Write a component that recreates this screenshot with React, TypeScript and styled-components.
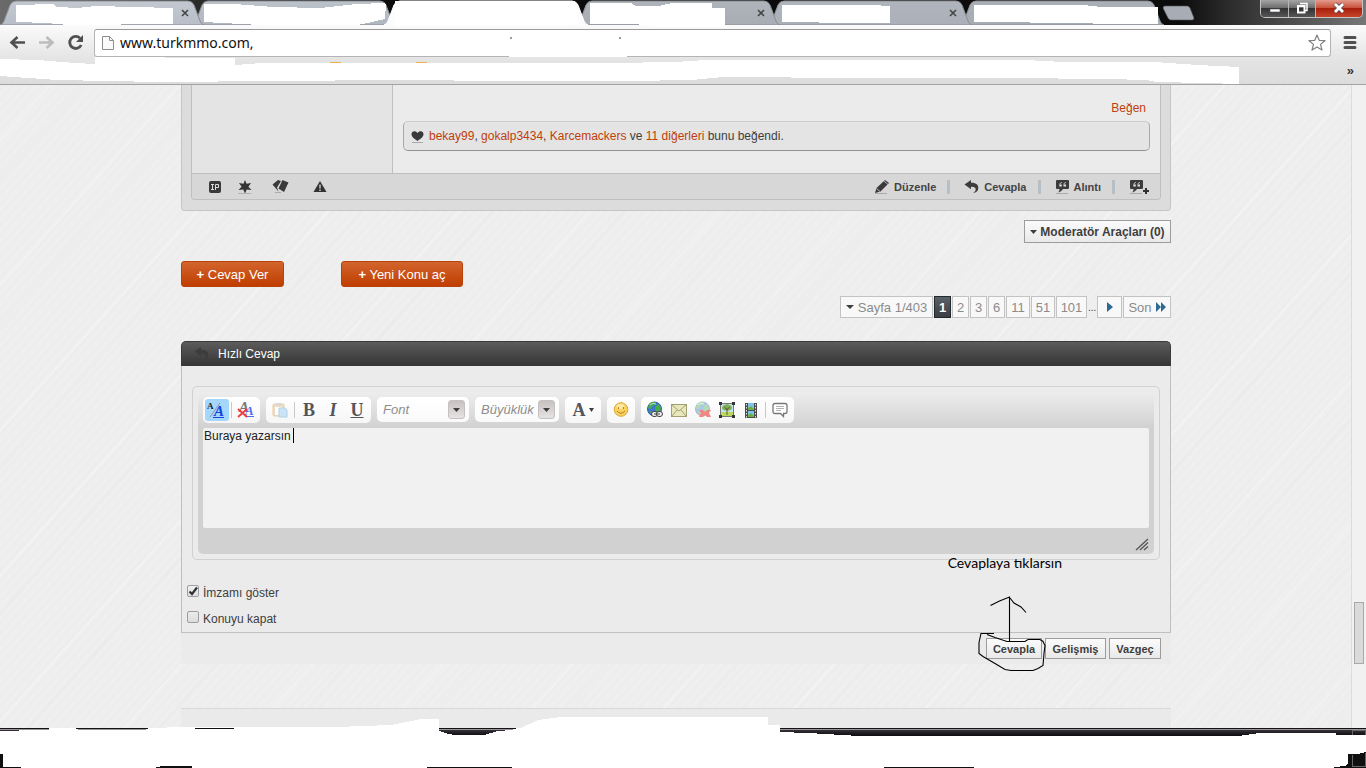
import React from "react";
import styled, { createGlobalStyle, css } from "styled-components";

const Global = createGlobalStyle`
  *, *::before, *::after { box-sizing: border-box; }
  body { margin: 0; background: #fff; font-family: "Liberation Sans", Arial, sans-serif; font-size: 12px; color: #3e3e3e; }
  button, input, select, textarea { font-family: inherit; margin: 0; }
`;

/* ---------- browser window ---------- */

const Screen = styled.div`
  position: relative;
  display: flex;
  flex-direction: column;
  min-height: 100vh;
  overflow: hidden;
`;

const Chrome = styled.header`
  position: relative;
  border-bottom: 1px solid #a3a3a3;
`;

const TabStrip = styled.nav`
  display: flex;
  height: 25px;
  background: linear-gradient(90deg, #6b6b6b 0, #2c2c2c 190px, #0c0c0c 400px, #0c0c0c 1180px, #2c2c2c 1230px, #777 100%);
`;

const TabBox = styled.button<{ $z: number }>`
  position: relative;
  z-index: ${(p) => p.$z};
  flex: 0 0 204px;
  height: 25px;
  margin-right: -12px;
  padding: 0;
  border: 0;
  background: none;
  svg { display: block; }
`;

const NewTab = styled.button`
  width: 32px;
  height: 25px;
  margin-left: 11px;
  padding: 0;
  border: 0;
  background: none;
  svg { display: block; }
`;

const WindowControls = styled.div`
  display: flex;
  height: 18px;
  margin-left: auto;
  margin-right: 3px;
  border: 1px solid #c4c4c4;
  border-top: 0;
  border-radius: 0 0 5px 5px;
  overflow: hidden;
`;

const WindowButton = styled.button<{ $close?: boolean }>`
  width: ${(p) => (p.$close ? 47 : 27)}px;
  padding: 0;
  border: 0;
  border-left: 1px solid #b5b5b5;
  background: ${(p) =>
    p.$close
      ? "linear-gradient(#e39a8c, #c9533c 45%, #a8200c 50%, #c6442a)"
      : "linear-gradient(#a5a5a5, #6e6e6e 45%, #333 50%, #565656)"};
  &:first-child { border-left: 0; }
  svg { display: block; margin: 0 auto; }
`;

const ToolbarArea = styled.div`
  background: linear-gradient(#fbfbfb, #e4e4e4 34px, #dcdcdc);
`;

const Toolbar = styled.div`
  display: flex;
  align-items: center;
  height: 32px;
  padding: 4px 8px 0;
`;

const NavButton = styled.button`
  width: 20px;
  height: 20px;
  margin-right: 9px;
  padding: 0;
  border: 0;
  background: none;
  svg { display: block; }
`;

const AddressBox = styled.label`
  display: flex;
  align-items: center;
  flex: 1;
  height: 28px;
  margin-right: 11px;
  margin-left: -1px;
  padding: 0 4px 0 6px;
  background: #fff;
  border: 1px solid #b4b4b4;
  border-top-color: #999;
  border-radius: 3px;
`;

const AddressInput = styled.input`
  flex: 1;
  height: 24px;
  padding: 0 0 2px 5px;
  border: 0;
  outline: 0;
  background: none;
  color: #111;
  font-family: "Noto Sans", "Open Sans", sans-serif;
  font-size: 14px;
`;

const MenuButton = styled(NavButton)`
  width: 16px;
  margin-right: 0;
`;

const BookmarkBar = styled.div`
  display: flex;
  justify-content: flex-end;
  align-items: center;
  height: 27px;
  padding-right: 12px;
`;

const MoreButton = styled.button`
  padding: 0;
  border: 0;
  background: none;
  font-size: 13px;
  font-weight: bold;
  line-height: 20px;
  color: #333;
`;

const Overlay = styled.svg<{ $bottom?: boolean; $z?: number }>`
  position: absolute;
  left: 0;
  ${(p) => (p.$bottom ? "bottom: 0;" : "top: 0;")}
  z-index: ${(p) => p.$z ?? 10};
  pointer-events: none;
`;

/* ---------- page ---------- */

const Viewport = styled.div`
  display: flex;
  flex: 1;
`;

const Page = styled.main`
  flex: 1;
  display: flex;
  justify-content: center;
  padding-left: 1px;
  background:
    repeating-linear-gradient(132deg, transparent 0 36px, rgba(255,255,255,.25) 37px 38px, transparent 39px 61px, rgba(0,0,0,.006) 62px 64px, transparent 65px 97px),
    repeating-linear-gradient(132deg, rgba(255,255,255,.08) 0 1px, rgba(0,0,0,.004) 2px 4px, rgba(255,255,255,.06) 5px 7px),
    #eeeeee;
`;

const ScrollTrack = styled.div`
  display: flex;
  flex-direction: column;
  justify-content: flex-end;
  width: 15px;
  padding: 0 1px 64px 2px;
  background: #f1f1f1;
  border-left: 1px solid #dcdcdc;
`;

const ScrollThumb = styled.div`
  width: 10px;
  height: 62px;
  border: 1px solid #a9a9a9;
  background: #dadada;
`;

const Column = styled.div`
  position: relative;
  display: flex;
  flex-direction: column;
  flex: 0 1 990px;
  min-width: 0;
`;

const Post = styled.article`
  padding: 0 10px 10px;
  background: #dcdcdc;
  border: 1px solid #c6c6c6;
  border-top: 0;
  border-radius: 0 0 4px 4px;
`;

const PostInner = styled.div`
  border: 1px solid #bfbfbf;
  border-top: 0;
  border-radius: 0 0 4px 4px;
  margin: 0 -1px;
`;

const PostContent = styled.div`
  display: flex;
  height: 88px;
`;

const UserColumn = styled.div`
  width: 201px;
  background: #e4e4e4;
  border-right: 1px solid #bfbfbf;
`;

const PostBody = styled.div`
  flex: 1;
  display: flex;
  flex-direction: column;
  padding: 15px 10px 0;
  background: #ebebeb;
`;

const TextLink = styled.a<{ $end?: boolean }>`
  color: #be3e0c;
  text-decoration: none;
  ${(p) => p.$end && css`
    align-self: flex-end;
    padding-right: 4px;
    line-height: 16px;
  `}
`;

const LikeBox = styled.div`
  display: flex;
  align-items: center;
  gap: 5px;
  height: 30px;
  margin-top: 5px;
  padding: 0 7px;
  background: #e4e4e4;
  border: 1px solid #a9a9a9;
  border-top-color: #cdcdcd;
  border-bottom-color: #919191;
  border-radius: 5px;
`;

const PostFooter = styled.div`
  display: flex;
  align-items: center;
  height: 26px;
  padding: 0 11px 0 15px;
  background: #d7d7d7;
  border-top: 1px solid #bfbfbf;
  border-radius: 0 0 4px 4px;
`;

const IconLink = styled.a<{ $w: number }>`
  display: flex;
  justify-content: center;
  width: ${(p) => p.$w}px;
`;

const PostActions = styled.div`
  display: flex;
  align-items: center;
  margin-left: auto;
`;

const PostAction = styled.a`
  display: flex;
  align-items: center;
  gap: 4px;
  color: #444;
  font-size: 11px;
  font-weight: bold;
  text-decoration: none;
`;

const Divider = styled.span`
  width: 3px;
  height: 14px;
  margin: 0 14px 0 11px;
  background: #b6bfc5;
`;

const Row = styled.div<{ $top: number; $end?: boolean; $gap?: number }>`
  display: flex;
  align-items: center;
  justify-content: ${(p) => (p.$end ? "flex-end" : "flex-start")};
  gap: ${(p) => p.$gap ?? 0}px;
  margin-top: ${(p) => p.$top}px;
`;

const GreyButton = styled.button<{ $large?: boolean; $w: number }>`
  display: flex;
  align-items: center;
  justify-content: center;
  gap: 3px;
  width: ${(p) => p.$w}px;
  height: ${(p) => (p.$large ? 23 : 21)}px;
  padding: 0;
  border: 1px solid #9c9c9c;
  background: linear-gradient(#fbfbfb, #e9e9e9);
  color: #3e3e3e;
  font-size: ${(p) => (p.$large ? 12 : 11)}px;
  font-weight: bold;
  white-space: nowrap;
`;

const OrangeButton = styled.button<{ $w: number }>`
  width: ${(p) => p.$w}px;
  height: 26px;
  padding: 0;
  border: 1px solid #b9420a;
  border-radius: 3px;
  background: linear-gradient(#d2652e, #c03d00);
  color: #fff;
  font-size: 13px;
`;

const PageLink = styled.a<{ $w: number; $current?: boolean }>`
  display: flex;
  align-items: center;
  justify-content: center;
  gap: 4px;
  width: ${(p) => p.$w}px;
  height: 22px;
  border: 1px solid ${(p) => (p.$current ? "#222a30" : "#c3c3c3")};
  background: ${(p) => (p.$current ? "linear-gradient(#5a6167, #393f45)" : "#f8f8f8")};
  color: ${(p) => (p.$current ? "#fff" : "#8b8b8b")};
  font-size: 13px;
  font-weight: ${(p) => (p.$current ? "bold" : "normal")};
  text-decoration: none;
`;

const Ellipsis = styled.span`
  width: 8px;
  font-size: 10px;
`;

const PanelTitle = styled.h2`
  display: flex;
  align-items: center;
  gap: 8px;
  height: 25px;
  margin: 23px 0 0;
  padding-left: 12px;
  border: 1px solid #3a3a3a;
  border-bottom: 0;
  border-radius: 5px 5px 0 0;
  background: linear-gradient(#5c5c5c, #343434);
  color: #fff;
  font-size: 12px;
  font-weight: normal;
`;

const PanelBody = styled.div`
  padding: 20px 10px 0;
  border: 1px solid #c0c0c0;
  border-top: 0;
  background: #ebebeb;
`;

const EditorFrame = styled.div`
  padding: 5px;
  border: 1px solid #d1d1d1;
  border-radius: 5px;
`;

const Editor = styled.div`
  position: relative;
  padding: 0 5px;
  border-radius: 5px;
  background: linear-gradient(#ededed 0, #d1d1d1 36px, #d1d1d1 100%);
`;

const EditorTools = styled.div`
  display: flex;
  gap: 6px;
  height: 36px;
  padding-top: 5px;
`;

const ToolGroup = styled.div`
  display: flex;
  align-items: center;
  height: 26px;
  padding: 0 2px;
  border-radius: 5px;
  background: linear-gradient(#fff, #f6f6f6);
`;

const ToolButton = styled.button<{ $active?: boolean; $wide?: boolean }>`
  display: flex;
  align-items: center;
  justify-content: center;
  gap: 3px;
  width: ${(p) => (p.$wide ? 32 : 24)}px;
  height: 22px;
  padding: 0;
  border: 0;
  border-radius: 3px;
  background: ${(p) => (p.$active ? "#a5d6fc" : "none")};
  color: #54545c;
  font-family: "Liberation Serif", serif;
  font-size: 18px;
  font-weight: bold;
  line-height: 22px;
`;

const ToolSeparator = styled.span`
  width: 1px;
  height: 16px;
  margin: 0 2px;
  background: #c9c9c9;
`;

const SelectBox = styled.div<{ $w: number }>`
  position: relative;
  width: ${(p) => p.$w}px;
  height: 25px;
  border-radius: 5px;
  background: linear-gradient(#fff, #fafafa);
`;

const ToolSelect = styled.select`
  width: 100%;
  height: 25px;
  padding: 0 0 0 6px;
  border: 0;
  background: none;
  appearance: none;
  color: #8d8d8d;
  font-size: 13px;
  font-style: italic;
`;

const SelectArrow = styled.span`
  position: absolute;
  top: 3px;
  right: 4px;
  display: flex;
  align-items: center;
  justify-content: center;
  width: 17px;
  height: 19px;
  border: 1px solid #c6c0c0;
  border-radius: 3px;
  background: linear-gradient(#c8c1c1, #e6e3e3);
  pointer-events: none;
`;

const Message = styled.textarea`
  display: block;
  width: 100%;
  height: 100px;
  padding: 1px;
  border: 0;
  border-radius: 2px;
  outline: 0;
  resize: none;
  background: #f1f1f1;
  color: #222;
  font-size: 12px;
  line-height: 14px;
`;

const Caret = styled.span`
  position: absolute;
  left: 95px;
  top: 36px;
  width: 1px;
  height: 15px;
  background: #000;
`;

const GripRow = styled.div`
  display: flex;
  justify-content: flex-end;
  align-items: center;
  height: 26px;
  padding-top: 6px;
`;

const Options = styled.div`
  margin: 20px 0 0 -5px;
`;

const Option = styled.label`
  display: flex;
  align-items: center;
  gap: 4px;
  height: 26px;
  line-height: 15px;
`;

const OptionBox = styled.input`
  appearance: none;
  width: 12px;
  height: 12px;
  margin: 0 0 4px;
  border: 1px solid #9e9e9e;
  border-radius: 2px;
  background: linear-gradient(#ececec, #dcdcdc);
  &:checked {
    background: url("data:image/svg+xml,%3Csvg xmlns='http://www.w3.org/2000/svg' viewBox='0 0 10 10'%3E%3Cpath d='M1.5 5.5 4 8 9 1.5' fill='none' stroke='%23333' stroke-width='2.2'/%3E%3C/svg%3E") center / 10px 10px no-repeat, linear-gradient(#f1f1f1, #dfdfdf);
  }
`;

const SubmitBar = styled.div`
  display: flex;
  justify-content: flex-end;
  gap: 3px;
  height: 31px;
  padding: 5px 10px 0;
  background: #ebebeb;
`;

const FooterBlock = styled.footer`
  flex: 1;
  min-height: 19px;
  margin-top: 44px;
  border-top: 1px solid #d8d8d8;
  background: #eaeaea;
`;

const Note = styled.p`
  position: absolute;
  right: 109px;
  top: 469px;
  margin: 0;
  color: #000;
  font-family: "Lato", "Open Sans", sans-serif;
  font-size: 14px;
  line-height: 18px;
  white-space: nowrap;
`;

const Drawing = styled.svg`
  position: absolute;
  right: 121px;
  top: 510px;
  pointer-events: none;
`;

const Taskbar = styled.div`
  position: relative;
  height: 40px;
  background: linear-gradient(#141214 0 1px, #989498 1px 2px, #343238 2px, #121012 7px, #101010);
`;

/* ---------- icons ---------- */

const tones = [
  ["#c3c8d0", "#b8bec8"],
  ["#bcc2ca", "#b0b6c0"],
  ["#ffffff", "#fbfbfb"],
  ["#afb4bb", "#a8adb5"],
  ["#b0b5bc", "#aab0b8"],
  ["#aab0b8", "#a6acb4"],
];

const Tab = ({ i, close }: { i: number; close?: boolean }) => (
  <TabBox $z={i === 2 ? 9 : 8 - i} aria-label={`Sekme ${i + 1}`}>
    <svg width="204" height="25" viewBox="0 0 204 25">
      <defs>
        <linearGradient id={`tab${i}`} x2="0" y2="1">
          <stop stopColor={tones[i][0]} />
          <stop offset="1" stopColor={tones[i][1]} />
        </linearGradient>
      </defs>
      <path
        d="M0 25Q3 24 4 21L10 5Q12 1 16 1H188Q192 1 194 5L200 21Q201 24 204 25Z"
        fill={`url(#tab${i})`}
        stroke={i === 2 ? "#fff" : "#8a8e94"}
      />
      {close && <path d="m182 10 6 6m0-6-6 6" stroke="#444" strokeWidth="1.6" />}
    </svg>
  </TabBox>
);

const Triangle = ({ w = 7, color = "#3e3e3e" }: { w?: number; color?: string }) => (
  <svg width={w} height="4" viewBox="0 0 8 4" preserveAspectRatio="none"><path d="M0 0h8L4 4z" fill={color} /></svg>
);

const ReplyIcon = ({ color = "#3c3c3c" }: { color?: string }) => (
  <svg width="16" height="16" viewBox="0 0 16 16">
    <path d="M0.5 5.5 7 1v2.8C12 3.5 14.5 6 14.3 9c0 3-2 4.8-5.3 5 2.2-1.3 3-2.6 2.6-4.2C11.200 8.300 9.700 7.500 7 7.700v2.600z" fill={color} />
  </svg>
);

const QuoteIcon = ({ plus }: { plus?: boolean }) => (
  <svg width={plus ? 20 : 15} height="16" viewBox={plus ? "0 0 20 16" : "0 0 15 16"}>
    <path d="M2 1h11q1 0 1 1v7q0 1-1 1H8c-1 2-3 3-5 3.500 1-1 1.500-2 1.500-3.500H2q-1 0-1-1V2q0-1 1-1z" fill="#3c3c3c" />
    <path d="M6.800 3.500C5.800 3.700 5 4.200 5 5.500M10.800 3.500C9.800 3.700 9 4.200 9 5.500" stroke="#ddd" fill="none" />
    <path d="M4.300 5.500h2.500v2H4.300zM8.500 5.500H11v2H8.500z" fill="#ddd" />
    <path d="M1 14.500h12" stroke="#aaa" />
    {plus && <path d="M14 12h6m-3-3v6" stroke="#333" strokeWidth="2" />}
  </svg>
);

const Globe = ({ dim, children }: { dim?: boolean; children: React.ReactNode }) => (
  <svg width="18" height="18" viewBox="0 0 18 18">
    <g opacity={dim ? 0.4 : 1}>
      <circle cx="8.500" cy="8" r="7" fill="#3f77cf" stroke="#365c9c" />
      <path d="M3 3c2-2 5-2.500 7-1.500L9 4 6 5 5 8 2 7zM10 5l3-2 2 4-1 4-3 1-2-4zM3 10l4 1 1 3-2 0z" fill="#46ae45" />
      <path d="M4 4q3-3 6-1" stroke="#b7d6f7" fill="none" />
    </g>
    {children}
  </svg>
);

export default function App() {
  return (
    <>
      <Global />
      <Screen>
        <Chrome>
          <TabStrip>
            <Tab i={0} close />
            <Tab i={1} />
            <Tab i={2} />
            <Tab i={3} close />
            <Tab i={4} close />
            <Tab i={5} />
            <NewTab aria-label="Yeni sekme">
              <svg width="32" height="25" viewBox="0 0 32 25">
                <path d="M2 6h22q2 0 3 2l4 10q0 2-2 2H8q-2 0-3-2L0 8q0-2 2-2z" fill="#a8adb5" stroke="#555" strokeWidth=".6" />
              </svg>
            </NewTab>
            <WindowControls>
              <WindowButton aria-label="Küçült">
                <svg width="14" height="17"><rect x="2" y="9" width="10" height="3" fill="#fff" stroke="#4d4d5c" strokeWidth=".6" /></svg>
              </WindowButton>
              <WindowButton aria-label="Geri yükle">
                <svg width="14" height="17">
                  <path d="M5 3.500h7v7h-2" fill="none" stroke="#fff" strokeWidth="1.500" />
                  <path d="M3 6h6.500v6.500H3z" fill="none" stroke="#fff" strokeWidth="2" />
                </svg>
              </WindowButton>
              <WindowButton $close aria-label="Kapat">
                <svg width="14" height="17">
                  <path d="m3 4 8 8m0-8-8 8" stroke="#5b4b57" strokeWidth="4.500" />
                  <path d="m3 4 8 8m0-8-8 8" stroke="#fff" strokeWidth="2.800" />
                </svg>
              </WindowButton>
            </WindowControls>
          </TabStrip>
          <ToolbarArea>
            <Toolbar>
              <NavButton aria-label="Geri">
                <svg width="20" height="20" viewBox="0 0 20 20"><path d="M17 9.500H4m5.500-5.500L3.500 9.500l6 5.500" fill="none" stroke="#505050" strokeWidth="2.600" /></svg>
              </NavButton>
              <NavButton aria-label="İleri">
                <svg width="20" height="20" viewBox="0 0 20 20"><path d="M2 9.500h13m-5.500-5.500 6 5.500-6 5.500" fill="none" stroke="#bcbcbc" strokeWidth="2.600" /></svg>
              </NavButton>
              <NavButton aria-label="Yenile">
                <svg width="20" height="20" viewBox="0 0 20 20">
                  <path d="M14 5.200A6 6 0 1 0 15.200 12" fill="none" stroke="#505050" strokeWidth="2.800" />
                  <path d="M17 2v7h-7z" fill="#505050" />
                </svg>
              </NavButton>
              <AddressBox>
                <svg width="14" height="18" viewBox="0 0 14 18">
                  <path d="M1.500 2.500h7l4 4v9h-11z" fill="#fbfbfb" stroke="#8e8e8e" />
                  <path d="M8.500 2.500v4h4" fill="none" stroke="#8e8e8e" />
                </svg>
                <AddressInput aria-label="Adres" defaultValue="www.turkmmo.com," />
                <svg width="18" height="18" viewBox="0 0 18 18">
                  <path d="m9 1 2.200 5.300 5.800.4-4.500 3.700 1.500 5.700L9 13l-5 3.100 1.500-5.700L1 6.700l5.800-.4z" fill="#fff" stroke="#808080" strokeWidth="1.200" strokeLinejoin="round" />
                </svg>
              </AddressBox>
              <MenuButton aria-label="Menü">
                <svg width="16" height="20" viewBox="0 0 16 20"><path d="M3 4.500h10M3 9.500h10M3 14.500h10" stroke="#505050" strokeWidth="3" strokeLinecap="round" /></svg>
              </MenuButton>
            </Toolbar>
            <BookmarkBar>
              <MoreButton>»</MoreButton>
            </BookmarkBar>
          </ToolbarArea>
          <Overlay width="1366" height="85" aria-hidden="true" shapeRendering="crispEdges">
            <g fill="#fff">
              <path d="M16 5 53 4 57 7 78 8 95 6 173 8V24L68 25 47 23 16 22z" />
              <path d="M204 4h30l40 3 46 1 37-4 27-1 2 1-1 15-13 3-15 3-76 1-40-2-37-2z" />
              <path d="M395 1h180l4 24-34 1h-150z" />
              <path d="M590 3h41l5 3h23l13-3h40v5h13v18l-13 1h-57l-19-3h-46z" />
              <path d="M782 5h90l18 1v17h-35l-73-1z" />
              <path d="M974 5h110l17 2h57v17h-57l-17-1-110-1z" />
              <path d="M0 59 38 60 75 63 95 64V57L235 58V65L262 63 537 63H611L675 62 706 60H1025L1063 62H1155L1198 65 1239 67V84L1205 83 1157 82 1146 80 1107 79 1008 78H857L723 77 692 80 628 81H512L394 80 160 82 57 80 0 76z" />
              <path d="M509 54h118v3H509z" />
            </g>
            <path d="M330 62.500h11M416 62.500h11" stroke="#f0b04e" />
            <path d="M510 37.500h2M619 37.500h2" stroke="#a29a9a" strokeWidth="2" />
          </Overlay>
        </Chrome>

        <Viewport>
          <Page>
            <Column>
              <Post>
                <PostInner>
                  <PostContent>
                    <UserColumn />
                    <PostBody>
                      <TextLink href="#" $end>Beğen</TextLink>
                      <LikeBox>
                        <svg width="13" height="13" viewBox="0 0 13 13">
                          <path d="M6.500 11C3 8.500.500 7 .500 4 .500 1 4.500 0 6.500 3c2-3 6-2 6 1 0 3-2.500 4.500-6 7z" fill="#3a3a3a" />
                          <path d="M1 12.500h11" stroke="#aaa" />
                        </svg>
                        <span>
                          <TextLink href="#">bekay99</TextLink>, <TextLink href="#">gokalp3434</TextLink>,{" "}
                          <TextLink href="#">Karcemackers</TextLink> ve <TextLink href="#">11 diğerleri</TextLink> bunu beğendi.
                        </span>
                      </LikeBox>
                    </PostBody>
                  </PostContent>
                  <PostFooter>
                    <IconLink href="#" $w={16} aria-label="IP">
                      <svg width="12" height="12" viewBox="0 0 12 12">
                        <rect width="12" height="12" rx="2" fill="#3a3a3a" />
                        <path d="M2 3.500h3M2 8.500h3M3.500 3v6M6.500 9V3.500H9.500V6.500H7" fill="none" stroke="#ddd" />
                      </svg>
                    </IconLink>
                    <IconLink href="#" $w={44} aria-label="Uyarı ver">
                      <svg width="14" height="14" viewBox="0 0 14 14">
                        <path d="m7 0 1.500 3.800L13 3l-2.600 3.700L13.500 10l-4.800-.5L7 13.500 5.300 9.500.500 10l3.100-3.300L1 3l4.500.8z" fill="#333" />
                        <path d="M0 13.500h13" stroke="#aaa" strokeWidth=".8" />
                      </svg>
                    </IconLink>
                    <IconLink href="#" $w={26} aria-label="Kartlar">
                      <svg width="17" height="15" viewBox="0 0 17 15">
                        <path d="M.500 5.500 6 1l3 1-4 6.500 1.500 4z" fill="#3a3a3a" />
                        <path d="m10.500 1 6 2.500-4.500 9.500-5.500-3.500z" fill="#3a3a3a" />
                        <path d="M3 13.500h6" stroke="#aaa" />
                      </svg>
                    </IconLink>
                    <IconLink href="#" $w={54} aria-label="Şikayet et">
                      <svg width="14" height="13" viewBox="0 0 14 13">
                        <path d="m7 1 6.500 11H.500z" fill="#333" />
                        <path d="M7 4.500v4m0 1v1.500" stroke="#ddd" strokeWidth="1.300" />
                      </svg>
                    </IconLink>
                    <PostActions>
                      <PostAction href="#">
                        <svg width="16" height="16" viewBox="0 0 16 16">
                          <path d="m1 14 1.500-5L11 1l4 3-8.500 8.500z" fill="#3a3a3a" />
                          <path d="m2.500 9.500 3.500 3M10 2l4 3.500" stroke="#d7d7d7" strokeWidth=".8" />
                          <path d="M1 14.500h12" stroke="#aaa" />
                        </svg>
                        Düzenle
                      </PostAction>
                      <Divider />
                      <PostAction href="#"><ReplyIcon />Cevapla</PostAction>
                      <Divider />
                      <PostAction href="#"><QuoteIcon />Alıntı</PostAction>
                      <Divider />
                      <PostAction href="#" aria-label="Çoklu alıntı"><QuoteIcon plus /></PostAction>
                    </PostActions>
                  </PostFooter>
                </PostInner>
              </Post>

              <Row $top={9} $end>
                <GreyButton $large $w={147}><Triangle />Moderatör Araçları (0)</GreyButton>
              </Row>
              <Row $top={18} $gap={57}>
                <OrangeButton $w={103}><b>+</b> Cevap Ver</OrangeButton>
                <OrangeButton $w={122}><b>+</b> Yeni Konu aç</OrangeButton>
              </Row>
              <Row $top={9} $end $gap={1}>
                <PageLink href="#" $w={93}><Triangle w={8} />Sayfa 1/403</PageLink>
                <PageLink href="#" $w={17} $current>1</PageLink>
                <PageLink href="#" $w={17}>2</PageLink>
                <PageLink href="#" $w={17}>3</PageLink>
                <PageLink href="#" $w={17}>6</PageLink>
                <PageLink href="#" $w={24}>11</PageLink>
                <PageLink href="#" $w={24}>51</PageLink>
                <PageLink href="#" $w={31}>101</PageLink>
                <Ellipsis>...</Ellipsis>
                <PageLink href="#" $w={25} aria-label="Sonraki">
                  <svg width="6" height="10"><path d="M0 0 6 5 0 10z" fill="#2b6a93" /></svg>
                </PageLink>
                <PageLink href="#" $w={48}>
                  Son
                  <svg width="10" height="10"><path d="M0 0 5 5 0 10zM5 0l5 5-5 5z" fill="#2b6a93" /></svg>
                </PageLink>
              </Row>

              <PanelTitle><ReplyIcon color="#3d3d3d" />Hızlı Cevap</PanelTitle>
              <PanelBody>
                <EditorFrame>
                  <Editor>
                    <EditorTools>
                      <ToolGroup>
                        <ToolButton $active aria-label="Düzenleyici modu">
                          <svg width="20" height="18" viewBox="0 0 20 18">
                            <text x="0" y="8" fontSize="9" fill="#222">A</text>
                            <path d="M3 16 13 2" stroke="#888" strokeWidth=".8" />
                            <text x="7" y="15" fontSize="15" fontStyle="italic" fill="#1741e0">A</text>
                            <path d="M6 16.500h11" stroke="#1741e0" />
                          </svg>
                        </ToolButton>
                        <ToolSeparator />
                        <ToolButton aria-label="Biçimi kaldır">
                          <svg width="18" height="18" viewBox="0 0 18 18">
                            <text x="2" y="11" fontSize="15" fontStyle="italic" fill="#777">A</text>
                            <text x="8" y="14" fontSize="13" fontStyle="italic" fill="#4a6cf5">A</text>
                            <path d="M8 15.500h9" stroke="#4a6cf5" />
                            <path d="m1 8 9 8m0-8-9 8" stroke="#ef3b3b" strokeWidth="1.800" />
                          </svg>
                        </ToolButton>
                      </ToolGroup>
                      <ToolGroup>
                        <ToolButton aria-label="Yapıştır">
                          <svg width="16" height="16" viewBox="0 0 16 16" opacity=".55">
                            <rect x="1" y="2" width="11" height="12" rx="1" fill="#edc58d" stroke="#d9a865" />
                            <rect x="4" y="1" width="5" height="3" fill="#bbb" />
                            <path d="M3 5h7v8H3z" fill="#fff" />
                            <path d="M7 6h6l2 2v7H7z" fill="#a7d4f2" stroke="#76b2da" />
                          </svg>
                        </ToolButton>
                        <ToolSeparator />
                        <ToolButton>B</ToolButton>
                        <ToolButton><i>I</i></ToolButton>
                        <ToolButton><u>U</u></ToolButton>
                      </ToolGroup>
                      <SelectBox $w={92}>
                        <ToolSelect aria-label="Font"><option>Font</option></ToolSelect>
                        <SelectArrow><Triangle /></SelectArrow>
                      </SelectBox>
                      <SelectBox $w={84}>
                        <ToolSelect aria-label="Büyüklük"><option>Büyüklük</option></ToolSelect>
                        <SelectArrow><Triangle /></SelectArrow>
                      </SelectBox>
                      <ToolGroup>
                        <ToolButton $wide>A<Triangle w={5} /></ToolButton>
                      </ToolGroup>
                      <ToolGroup>
                        <ToolButton aria-label="İfadeler">
                          <svg width="16" height="16" viewBox="0 0 16 16">
                            <circle cx="8" cy="7.500" r="6.800" fill="#fbd15a" stroke="#dba53c" />
                            <ellipse cx="7.500" cy="4.500" rx="4" ry="2.500" fill="#fde9a6" />
                            <path d="M5.500 5v2m5-2v2M4 9q4 4.500 8 0" fill="none" stroke="#b08238" />
                          </svg>
                        </ToolButton>
                      </ToolGroup>
                      <ToolGroup>
                        <ToolButton aria-label="Bağlantı ekle">
                          <Globe>
                            <rect x="5.500" y="10.500" width="6" height="5" rx="2.500" fill="#eee" stroke="#444" />
                            <rect x="10.500" y="10.500" width="6" height="5" rx="2.500" fill="#eee" stroke="#444" />
                            <path d="M8 13h6" stroke="#444" />
                          </Globe>
                        </ToolButton>
                        <ToolButton aria-label="E-posta ekle">
                          <svg width="16" height="13" viewBox="0 0 16 13">
                            <rect x=".5" y=".5" width="15" height="12" fill="#e9e8bd" stroke="#a0a073" />
                            <path d="m1 1 7 6 7-6M1 12l5-6m9 6-5-6" fill="none" stroke="#a0a073" />
                          </svg>
                        </ToolButton>
                        <ToolButton aria-label="Bağlantıyı kaldır">
                          <Globe dim>
                            <path d="m5 9 4 0 2 2 2-2h4l-2 3 2 4h-4l-2-2-2 2H5l2-4z" fill="#f58585" />
                          </Globe>
                        </ToolButton>
                        <ToolButton aria-label="Resim ekle">
                          <svg width="16" height="16" viewBox="0 0 16 16">
                            <rect x="1.500" y="1.500" width="13" height="13" fill="#c3e2f6" stroke="#777" />
                            <path d="M2 10h12v4H2z" fill="#b9d95c" />
                            <path d="M3.500 7.500 3 5l2-2 3-1 3 1 2 2-.5 2.500L10 8.500H6z" fill="#7fb055" />
                            <path d="M8 6v7M5.500 5l2.500 3 2.500-3" stroke="#6c5a2e" fill="none" />
                            <path d="M0 0h3v3H0zM13 0h3v3h-3zM0 13h3v3H0zM13 13h3v3h-3z" fill="#333" />
                          </svg>
                        </ToolButton>
                        <ToolButton aria-label="Video ekle">
                          <svg width="12" height="15" viewBox="0 0 12 15">
                            <rect width="12" height="15" fill="#4c4c4c" />
                            <path d="M3 0h6v7H3zM3 8h6v6H3z" fill="#7cc3ee" />
                            <path d="m3 5 3-2 3 3v1H3zM3 12l3-2 3 3v1H3z" fill="#6fae3f" />
                            <path d="M1.500 1v14M10.500 1v14" stroke="#e2e2e2" strokeDasharray="1.500 1.500" />
                          </svg>
                        </ToolButton>
                        <ToolSeparator />
                        <ToolButton aria-label="Alıntı ekle">
                          <svg width="16" height="16" viewBox="0 0 16 16">
                            <path d="M3 1.500h10q2 0 2 2v6q0 2-2 2h-1.500V14.500l-3-3H3q-2 0-2-2v-6q0-2 2-2z" fill="#fff" stroke="#777" strokeWidth="1.300" />
                            <path d="M4 4.500h8M4 6.500h8M4 8.500h5" stroke="#b2b2b2" />
                          </svg>
                        </ToolButton>
                      </ToolGroup>
                    </EditorTools>
                    <Message aria-label="Mesaj" defaultValue="Buraya yazarsın " spellCheck={false} />
                    <Caret />
                    <GripRow>
                      <svg width="14" height="13" viewBox="0 0 14 13"><path d="M1 12 13 1M5 12l8-7.500M9 12l4-3.500" stroke="#555" strokeWidth="1.300" /></svg>
                    </GripRow>
                  </Editor>
                </EditorFrame>
                <Options>
                  <Option><OptionBox type="checkbox" defaultChecked />İmzamı göster</Option>
                  <Option><OptionBox type="checkbox" />Konuyu kapat</Option>
                </Options>
              </PanelBody>
              <SubmitBar>
                <GreyButton $w={56}>Cevapla</GreyButton>
                <GreyButton $w={61}>Gelişmiş</GreyButton>
                <GreyButton $w={52}>Vazgeç</GreyButton>
              </SubmitBar>
              <FooterBlock />

              <Note>Cevaplaya tıklarsın</Note>
              <Drawing width="74" height="80" viewBox="976 595 74 80" aria-hidden="true">
                <path
                  d="M994 633.500h-13l-2 9v11l4 3 12 7 10 6 6 1h22l5-2 5-3 1-12 1-8-2-4-3-2h-12l-3 2h-18l-12-4-8-3M1009.500 641v-44l-10 4-9 4.500M1010 598l4 5 7 4 5 5.500"
                  fill="none" stroke="#000" strokeWidth="1.100"
                />
              </Drawing>
            </Column>
          </Page>
          <ScrollTrack><ScrollThumb /></ScrollTrack>
        </Viewport>

        <Taskbar />
        <Overlay $bottom width="1366" height="56" viewBox="0 712 1366 56" aria-hidden="true" shapeRendering="crispEdges">
          <path
            fill="#fff"
            d="M0 731H19V730H49V728H75L79 730H145L149 728H167V727H336L391 725 421 719H439V731L445 733 454 735H484L498 731 512 730 517 728H521L538 720 561 717H768V725H780V732L808 733 859 736H1239L1259 733H1336V735H1366V752L1358 754H1348V763L1346 766 1334 767V768H974V767H884V768H512V767H427V768H192V766H163L156 767V768H21V767H3V754H0z"
          />
          <path d="M195 728.500h39" stroke="#111" />
          <path d="M1352.500 735v-5h13v5M1352.500 755v11.500h13V753" fill="none" stroke="#666" />
        </Overlay>
      </Screen>
    </>
  );
}
